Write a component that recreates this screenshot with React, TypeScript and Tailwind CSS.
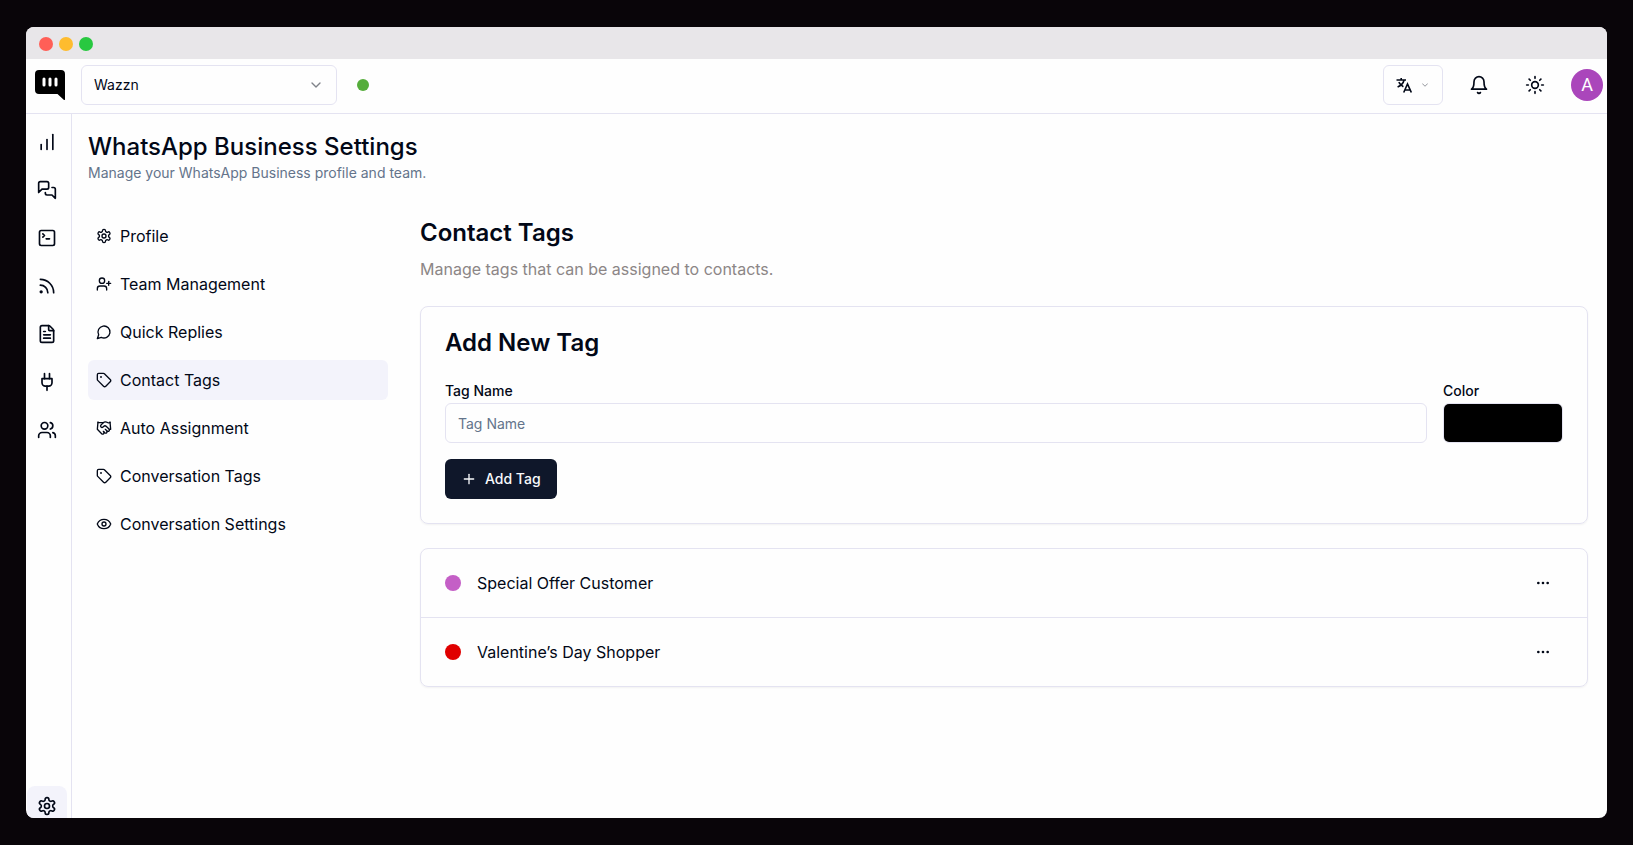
import type { ReactNode } from "react";
import {
  ChartNoAxesColumnIncreasing,
  ChevronDown,
  Ellipsis,
  Eye,
  FileText,
  Handshake,
  Plus,
  Rss,
  SquareTerminal,
  Sun,
  Tag,
  UserPlus
} from "lucide-react";

type IconProps = { className?: string };

function StrokeIcon({ className, children }: IconProps & { children: ReactNode }) {
  return (
    <svg
      className={className}
      viewBox="0 0 24 24"
      fill="none"
      stroke="currentColor"
      strokeWidth="2"
      strokeLinecap="round"
      strokeLinejoin="round"
      aria-hidden="true"
    >
      {children}
    </svg>
  );
}

const Bell = ({ className }: IconProps) => (
  <StrokeIcon className={className}>
    <path d="M6 8a6 6 0 0 1 12 0c0 7 3 9 3 9H3s3-2 3-9" />
    <path d="M10.3 21a1.94 1.94 0 0 0 3.4 0" />
  </StrokeIcon>
);

const Messages = ({ className }: IconProps) => (
  <StrokeIcon className={className}>
    <path d="M14 9a2 2 0 0 1-2 2H6l-4 4V4c0-1.1.9-2 2-2h8a2 2 0 0 1 2 2z" />
    <path d="M18 9h2a2 2 0 0 1 2 2v11l-4-4h-6a2 2 0 0 1-2-2v-1" />
  </StrokeIcon>
);

const MessageCircle = ({ className }: IconProps) => (
  <StrokeIcon className={className}>
    <path d="M7.9 20A9 9 0 1 0 4 16.1L2 22Z" />
  </StrokeIcon>
);

const Plug = ({ className }: IconProps) => (
  <StrokeIcon className={className}>
    <path d="M12 22v-5" />
    <path d="M9 8V2" />
    <path d="M15 8V2" />
    <path d="M18 8v5a4 4 0 0 1-4 4h-4a4 4 0 0 1-4-4V8Z" />
  </StrokeIcon>
);

const Users = ({ className }: IconProps) => (
  <StrokeIcon className={className}>
    <path d="M16 21v-2a4 4 0 0 0-4-4H6a4 4 0 0 0-4 4v2" />
    <circle cx="9" cy="7" r="4" />
    <path d="M22 21v-2a4 4 0 0 0-3-3.87" />
    <path d="M16 3.13a4 4 0 0 1 0 7.75" />
  </StrokeIcon>
);

const Settings = ({ className }: IconProps) => (
  <StrokeIcon className={className}>
    <path d="M12.22 2h-.44a2 2 0 0 0-2 2v.18a2 2 0 0 1-1 1.73l-.43.25a2 2 0 0 1-2 0l-.15-.08a2 2 0 0 0-2.73.73l-.22.38a2 2 0 0 0 .73 2.73l.15.1a2 2 0 0 1 1 1.72v.51a2 2 0 0 1-1 1.74l-.15.09a2 2 0 0 0-.73 2.73l.22.38a2 2 0 0 0 2.73.73l.15-.08a2 2 0 0 1 2 0l.43.25a2 2 0 0 1 1 1.73V20a2 2 0 0 0 2 2h.44a2 2 0 0 0 2-2v-.18a2 2 0 0 1 1-1.73l.43-.25a2 2 0 0 1 2 0l.15.08a2 2 0 0 0 2.73-.73l.22-.39a2 2 0 0 0-.73-2.73l-.15-.08a2 2 0 0 1-1-1.74v-.5a2 2 0 0 1 1-1.74l.15-.09a2 2 0 0 0 .73-2.73l-.22-.38a2 2 0 0 0-2.73-.73l-.15.08a2 2 0 0 1-2 0l-.43-.25a2 2 0 0 1-1-1.73V4a2 2 0 0 0-2-2z" />
    <circle cx="12" cy="12" r="3" />
  </StrokeIcon>
);

const Translate = ({ className }: IconProps) => (
  <svg
    className={className}
    viewBox="0 0 16 16"
    fill="none"
    stroke="currentColor"
    strokeWidth="1.6"
    aria-hidden="true"
  >
    <path d="M0.500 3h9.500M5.200 1v2M8 3.200C7.300 6.200 4.500 8.700 1.600 10M2.800 5.200C3.900 7.400 5.600 8.900 7.400 9.800" />
    <path d="M7.700 15.500L11.500 7l3.800 8.500M9 13h5" />
  </svg>
);

const Logo = () => (
  <svg className="size-[30px]" viewBox="0 0 30 30" aria-hidden="true">
    <path d="M4 0h22a4 4 0 0 1 4 4v25.5c0 .5-.6.7-1 .4L22.500 24H4a4 4 0 0 1-4-4V4a4 4 0 0 1 4-4z" fill="#000" />
    <rect x="7.500" y="7.500" width="3" height="9" rx="1.500" fill="#fff" />
    <rect x="13.500" y="7.500" width="3" height="9" rx="1.500" fill="#fff" />
    <rect x="19.500" y="7.500" width="3" height="9" rx="1.500" fill="#fff" />
  </svg>
);

const railItems = [
  { label: "Analytics", icon: ChartNoAxesColumnIncreasing },
  { label: "Conversations", icon: Messages },
  { label: "Console", icon: SquareTerminal },
  { label: "Broadcasts", icon: Rss },
  { label: "Templates", icon: FileText },
  { label: "Integrations", icon: Plug },
  { label: "Contacts", icon: Users }
];

const settingsItems = [
  { label: "Profile", icon: Settings },
  { label: "Team Management", icon: UserPlus },
  { label: "Quick Replies", icon: MessageCircle },
  { label: "Contact Tags", icon: Tag, active: true },
  { label: "Auto Assignment", icon: Handshake },
  { label: "Conversation Tags", icon: Tag },
  { label: "Conversation Settings", icon: Eye }
];

const tags = [
  { name: "Special Offer Customer", dot: "bg-[#c45fc6]" },
  { name: "Valentine’s Day Shopper", dot: "bg-[#e00000]" }
];

function Header() {
  return (
    <header className="flex shrink-0 items-center border-b border-[#e4e3f1] pt-1.5 pr-1 pb-2 pl-[9px]">
      <a href="#" aria-label="Home">
        <Logo />
      </a>
      <div className="relative ml-4 w-64">
        <select
          aria-label="Workspace"
          className="h-10 w-full appearance-none rounded-md border border-[#e4e3f1] px-3 text-sm"
        >
          <option>Wazzn</option>
        </select>
        <ChevronDown className="pointer-events-none absolute top-3 right-[13px] size-4 opacity-50" />
      </div>
      <span className="ml-5 size-3 rounded-full bg-[#55ad3b]" />

      <div className="ml-auto flex items-center gap-4">
        <button
          aria-label="Language"
          className="flex h-10 w-[60px] items-center justify-between rounded-md border border-[#e4e3f1] px-3"
        >
          <Translate className="size-4" />
          <ChevronDown className="size-2.5 opacity-50" />
        </button>
        <button aria-label="Notifications" className="flex size-10 items-center justify-center">
          <Bell className="size-5" />
        </button>
        <button aria-label="Toggle theme" className="flex size-10 items-center justify-center">
          <Sun className="size-5" />
        </button>
        <button
          aria-label="Account"
          className="flex size-8 items-center justify-center rounded-full bg-[#aa46bb] font-[Roboto] text-lg text-white"
        >
          A
        </button>
      </div>
    </header>
  );
}

function Rail() {
  return (
    <nav
      aria-label="Main"
      className="flex w-[46px] shrink-0 flex-col gap-2 border-r border-[#e4e3f1] pt-2 pl-px"
    >
      {railItems.map(({ label, icon: Icon }) => (
        <a key={label} href="#" aria-label={label} className="flex size-10 items-center justify-center">
          <Icon className="size-5" />
        </a>
      ))}
      <a
        href="#"
        aria-label="Settings"
        className="mt-auto -mb-2 flex size-10 shrink-0 items-center justify-center rounded-lg bg-[#f3f3fb]"
      >
        <Settings className="size-5" />
      </a>
    </nav>
  );
}

function AddTagCard() {
  return (
    <form className="mt-[25px] rounded-lg border border-[#e4e3f1] p-6 shadow-xs">
      <h3 className="text-2xl leading-6 font-semibold">Add New Tag</h3>
      <div className="mt-6 flex gap-4">
        <div className="flex flex-1 flex-col">
          <label htmlFor="tag-name" className="text-sm leading-6 font-medium">
            Tag Name
          </label>
          <input
            id="tag-name"
            type="text"
            placeholder="Tag Name"
            className="h-10 rounded-md border border-[#e4e3f1] px-3 text-sm placeholder:text-[#64748b]"
          />
        </div>
        <div className="flex w-30 flex-col">
          <label htmlFor="tag-color" className="text-sm leading-6 font-medium">
            Color
          </label>
          <input
            id="tag-color"
            type="color"
            defaultValue="#000000"
            className="h-10 w-full appearance-none overflow-hidden rounded-md border border-[#e4e3f1] [&::-webkit-color-swatch]:border-0 [&::-webkit-color-swatch-wrapper]:p-0"
          />
        </div>
      </div>
      <button
        type="button"
        className="mt-4 flex h-10 items-center gap-2 rounded-md bg-[#0f172a] px-4 text-sm font-medium text-[#f8fafc]"
      >
        <Plus className="size-4" />
        Add Tag
      </button>
    </form>
  );
}

export default function App() {
  return (
    <div className="flex h-screen bg-[#090509] px-[26px] py-[27px] font-[Inter,sans-serif] text-[#020817]">
      <div className="flex min-w-0 flex-1 flex-col overflow-hidden rounded-lg bg-[#fefefe]">
        <div className="flex h-8 shrink-0 items-center gap-1.5 bg-[#e8e6e9] px-[13px] pt-0.5">
          <span className="size-3.5 rounded-full bg-[#ff5f57]" />
          <span className="size-3.5 rounded-full bg-[#febc2e]" />
          <span className="size-3.5 rounded-full bg-[#28c840]" />
        </div>
        <Header />
        <div className="flex min-h-0 flex-1">
          <Rail />
          <main className="min-w-0 flex-1 pt-[17px] pr-[19px] pl-4">
            <h1 className="text-2xl font-medium">WhatsApp Business Settings</h1>
            <p className="text-sm text-[#64748b]">Manage your WhatsApp Business profile and team.</p>

            <div className="mt-[33px] flex gap-8">
              <nav aria-label="Settings" className="flex w-[300px] shrink-0 flex-col gap-2">
                {settingsItems.map(({ label, icon: Icon, active }) => (
                  <a
                    key={label}
                    href="#"
                    aria-current={active ? "page" : undefined}
                    className={`flex h-10 items-center gap-2 rounded-md px-2 ${active ? "bg-[#f3f3fb]" : ""}`}
                  >
                    <Icon className="size-4" />
                    {label}
                  </a>
                ))}
              </nav>

              <section className="min-w-0 flex-1 pt-px">
                <h2 className="text-2xl font-semibold">Contact Tags</h2>
                <p className="mt-2 text-[#8c8686]">Manage tags that can be assigned to contacts.</p>

                <AddTagCard />

                <ul className="mt-6 divide-y divide-[#e4e3f1] rounded-lg border border-[#e4e3f1] shadow-xs">
                  {tags.map((tag) => (
                    <li key={tag.name} className="flex items-center gap-4 px-6 py-3.5">
                      <span className={`size-4 rounded-full ${tag.dot}`} />
                      {tag.name}
                      <button
                        aria-label={`Actions for ${tag.name}`}
                        className="ml-auto flex size-10 items-center justify-center"
                      >
                        <Ellipsis className="size-4" />
                      </button>
                    </li>
                  ))}
                </ul>
              </section>
            </div>
          </main>
        </div>
      </div>
    </div>
  );
}
